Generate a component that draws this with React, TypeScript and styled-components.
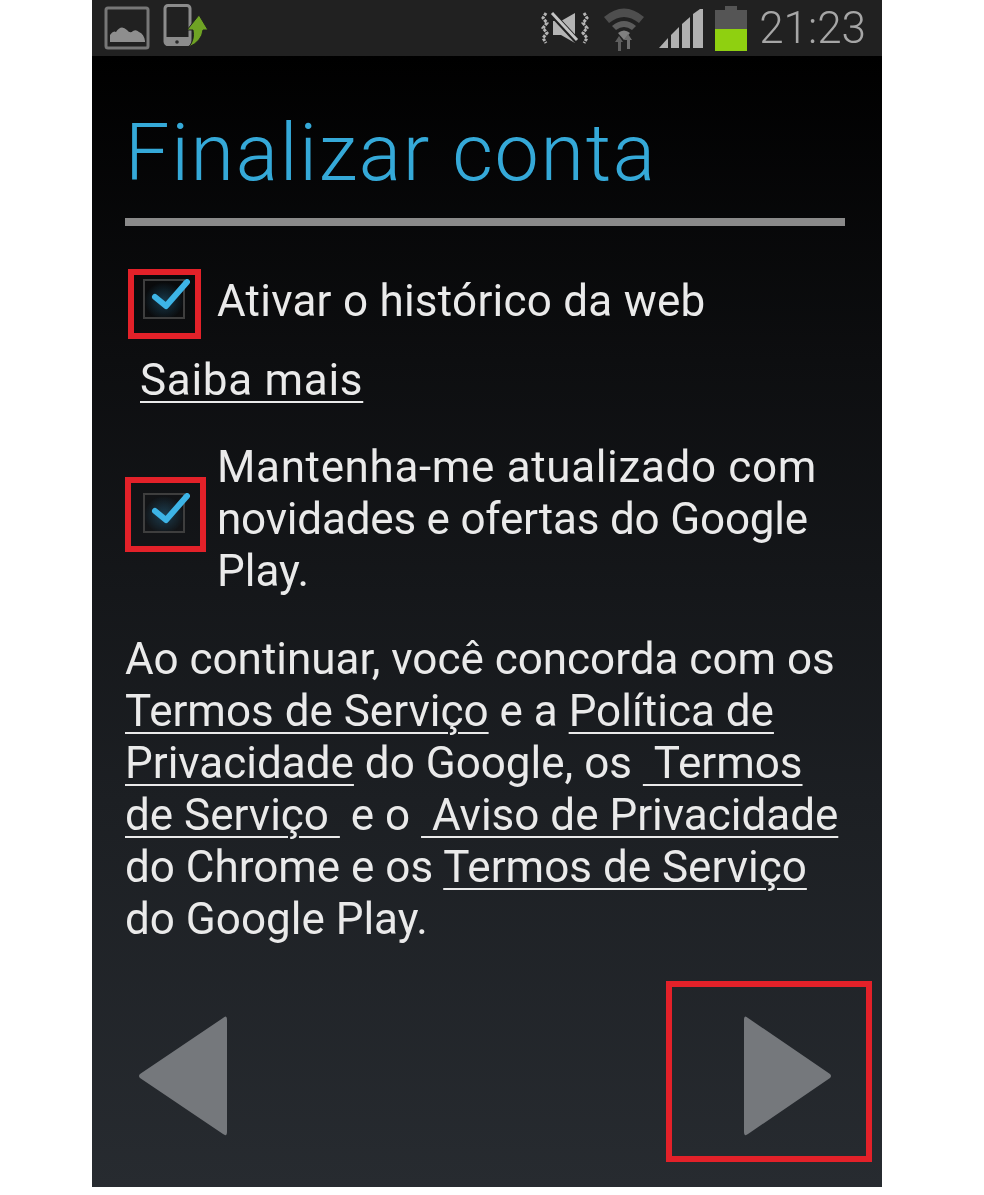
import React from "react"
import styled, { createGlobalStyle } from "styled-components"

const GlobalStyle = createGlobalStyle`
  html, body {
    margin: 0;
    padding: 0;
    background: #fff;
  }
`

export default function App() {
  return <Page>
    <GlobalStyle/>
    <Phone>
      <StatusBar>
        <StatusGroup>
          <PictureIcon/>
          <UploadIcon/>
        </StatusGroup>
        <StatusGroup>
          <MuteIcon/>
          <WifiIcon/>
          <SignalIcon/>
          <BatterySlot>
            <BatteryIcon/>
          </BatterySlot>
          <Clock>21:23</Clock>
        </StatusGroup>
      </StatusBar>
      <Content>
        <Title>Finalizar conta</Title>
        <Divider/>
        <OptionRow>
          <CheckFrame>
            <CheckIcon/>
          </CheckFrame>
          <SingleLine>Ativar o histórico da web</SingleLine>
        </OptionRow>
        <LearnMore>Saiba mais</LearnMore>
        <OptionRow $tall>
          <CheckFrame $large>
            <CheckIcon/>
          </CheckFrame>
          <BodyText>
            <Line $spacing={0.65}>Mantenha-me atualizado com</Line>
            <Line $spacing={-0.2}>novidades e ofertas do Google</Line>
            <Line>Play.</Line>
          </BodyText>
        </OptionRow>
        <Terms>
          Ao continuar, você concorda com os<br/>
          <Link>Termos de Serviço</Link> e a <Link>Política de</Link><br/>
          <Link>Privacidade</Link> do Google, os <Link>&nbsp;Termos</Link><br/>
          <Link>de Serviço&nbsp;</Link> e o <Link>&nbsp;Aviso de Privacidade</Link><br/>
          do Chrome e os <Link>Termos de Serviço</Link><br/>
          do Google Play.
        </Terms>
      </Content>
      <NavBar>
        <BackButton>
          <ArrowIcon direction="left"/>
        </BackButton>
        <NextButton>
          <ArrowIcon direction="right"/>
        </NextButton>
      </NavBar>
    </Phone>
  </Page>
}

function PictureIcon() {
  return <svg width="46" height="44" viewBox="0 0 46 44">
    <rect x="2" y="2" width="42" height="40" rx="2" fill="none" stroke="#777" strokeWidth="3"/>
    <path d="M6 36 V29 Q9 24 12 26 Q17 18 23 24 Q26 28 29 25 Q32 23 35 26 Q40 28 41 35 V36 Z" fill="#8e8e8e"/>
  </svg>
}

function UploadIcon() {
  return <UploadSvg width="46" height="46" viewBox="0 0 46 46">
    <rect x="1" y="2.5" width="25" height="39" rx="3" fill="none" stroke="#8c8c8c" strokeWidth="3"/>
    <path d="M1 34 H26 V40 Q26 43 23 43 H4 Q1 43 1 40 Z" fill="#8c8c8c"/>
    <circle cx="13" cy="39" r="1.8" fill="#2a2a2a"/>
    <path d="M35 12 L44 27 H39 Q38 38 25 44 Q31 36 29 27 H23 Z" fill="#6fa324" stroke="#212121" strokeWidth="1"/>
  </UploadSvg>
}

function MuteIcon() {
  return <svg width="48" height="34" viewBox="0 0 48 34">
    <path d="M12 10 H20 L34 2 V32 L20 24 H12 Z" fill="#b4b4b4"/>
    <path d="M12 4 L37 31" stroke="#212121" strokeWidth="6"/>
    <path d="M11 2 L36 29" stroke="#c4c4c4" strokeWidth="3"/>
    <path d="M5 2 L2 7 L6 12 L2 17 L6 22 L2 27 L5 32 M43 2 L46 7 L42 12 L46 17 L42 22 L46 27 L43 32" fill="none" stroke="#b4b4b4" strokeWidth="3" strokeDasharray="3 1"/>
  </svg>
}

function WifiIcon() {
  return <svg width="42" height="46" viewBox="0 0 42 46">
    <path d="M1 12 Q21 -5 41 12 L36 18 Q21 6 6 18 Z" fill="#4e4e4e"/>
    <path d="M9 21 Q21 11 33 21 L29 25 Q21 19 13 25 Z" fill="#5c5c5c"/>
    <path d="M15 28 Q21 23 27 28 L21 35 Z" fill="#808080"/>
    <path d="M15 46 V37 H12 L16 31 L20 37 H18 V46 Z" fill="#5e5e5e"/>
    <path d="M24 44 V35 H21 L25 29 L29 35 H27 V44 Z" fill="#6e6e6e"/>
  </svg>
}

function SignalIcon() {
  return <svg width="46" height="41" viewBox="0 0 46 41">
    <path d="M0 40 L9 30 V40 Z" fill="#b0b0b0"/>
    <path d="M12 27 L20 19 V40 H12 Z" fill="#b0b0b0"/>
    <path d="M23 16 L31 9 V40 H23 Z" fill="#b0b0b0"/>
    <path d="M34 6 L41 1 H44 V40 H34 Z" fill="#b0b0b0"/>
  </svg>
}

function BatteryIcon() {
  return <svg width="32" height="45" viewBox="0 0 32 45">
    <rect x="10" y="0" width="12" height="5" fill="#555"/>
    <rect x="0" y="4" width="32" height="19" fill="#555"/>
    <rect x="0" y="23" width="32" height="22" fill="#8fd010"/>
  </svg>
}

function CheckIcon() {
  return <CheckSvg width="50" height="50" viewBox="0 0 50 50">
    <defs>
      <radialGradient id="glow" cx="50%" cy="55%" r="50%">
        <stop offset="0%" stopColor="#2f8fc0" stopOpacity="0.35"/>
        <stop offset="100%" stopColor="#2f8fc0" stopOpacity="0"/>
      </radialGradient>
    </defs>
    <rect x="4" y="1" width="40" height="38" fill="url(#glow)"/>
    <rect x="4" y="1" width="40" height="38" fill="none" stroke="#3e3e3e" strokeWidth="2"/>
    <path d="M15 18 L26 27 L47 3" fill="none" stroke="#3db4e6" strokeWidth="6" strokeLinecap="round" strokeLinejoin="round"/>
  </CheckSvg>
}

function ArrowIcon({ direction }: { direction: "left" | "right" }) {
  return <svg width="90" height="122" viewBox="0 0 90 122">
    <path
      d={direction === "right"
        ? "M2 5 Q2 -1 6 3 L88 59 Q90 61 88 63 L6 119 Q2 122 2 117 Z"
        : "M89 5 Q89 -1 85 3 L2 59 Q0 61 2 63 L85 119 Q89 122 89 117 Z"}
      fill="#75787c"
      strokeLinejoin="round"
    />
  </svg>
}

const Page = styled.div`
  width: 984px;
  height: 1195px;
  padding-left: 92px;
  box-sizing: border-box;
  background: #fff;
  overflow: hidden;
`
const Phone = styled.div`
  width: 790px;
  height: 1187px;
  display: flex;
  flex-direction: column;
  background: linear-gradient(180deg, #000 56px, #0d0e10 360px, #1c1f23 800px, #272b30 1187px);
  font-family: Roboto, "Liberation Sans", sans-serif;
`
const StatusBar = styled.div`
  height: 56px;
  flex-shrink: 0;
  display: flex;
  align-items: center;
  justify-content: space-between;
  background: #212121;
  padding: 0 16px 0 12px;
  box-sizing: border-box;
`
const StatusGroup = styled.div`
  display: flex;
  align-items: center;
  gap: 14px;
  filter: blur(0.6px);
`
const UploadSvg = styled.svg`
  margin-top: -4px;
  overflow: visible;
`
const BatterySlot = styled.div`
  display: flex;
  margin-left: -4px;
`
const Clock = styled.span`
  margin-left: -2px;
  font-size: 44px;
  font-weight: 300;
  line-height: 56px;
  color: #a6a6a6;
`
const Content = styled.div`
  flex: 1;
  padding: 0 37px 0 33px;
  color: #eaeaea;
`
const Title = styled.h1`
  margin: 49px 0 0 0;
  font-size: 79px;
  font-weight: 300;
  line-height: 96px;
  letter-spacing: 1.7px;
  color: #35a9d8;
  filter: blur(0.7px);
`
const Divider = styled.div`
  height: 8px;
  margin-top: 17px;
  background: #8a8a8a;
`
const OptionRow = styled.div<{ $tall?: boolean }>`
  display: flex;
  align-items: center;
  margin-top: ${(p) => (p.$tall ? "35px" : "43px")};
`
const CheckFrame = styled.div<{ $large?: boolean }>`
  width: ${(p) => (p.$large ? "81px" : "73px")};
  height: ${(p) => (p.$large ? "75px" : "70px")};
  margin-left: ${(p) => (p.$large ? "0" : "3px")};
  margin-right: ${(p) => (p.$large ? "11px" : "16px")};
  margin-top: ${(p) => (p.$large ? "-10px" : "0")};
  padding: ${(p) => (p.$large ? "7px 2px 0 0" : "0")};
  box-sizing: border-box;
  border: 6px solid #e32129;
  display: flex;
  align-items: center;
  justify-content: center;
  flex-shrink: 0;
`
const CheckSvg = styled.svg`
  display: block;
  overflow: visible;
  filter: blur(0.5px);
`
const BodyText = styled.div`
  font-size: 44px;
  line-height: 52px;
  filter: blur(0.7px);
`
const SingleLine = styled(BodyText)`
  margin-top: -6px;
  letter-spacing: 0.25px;
`
const Line = styled.div<{ $spacing?: number }>`
  letter-spacing: ${(p) => p.$spacing ?? 0}px;
`
const LearnMore = styled.div`
  display: table;
  margin: 15px 0 0 15px;
  font-size: 44px;
  line-height: 52px;
  letter-spacing: 0.7px;
  text-decoration: underline;
  text-decoration-thickness: 2px;
  text-underline-offset: 6px;
  filter: blur(0.7px);
`
const Terms = styled.p`
  margin: 36px 0 0 0;
  font-size: 44px;
  line-height: 52px;
  white-space: nowrap;
  filter: blur(0.7px);
`
const Link = styled.span`
  text-decoration: underline;
  text-decoration-thickness: 2px;
  text-underline-offset: 6px;
`
const NavBar = styled.div`
  display: flex;
  align-items: center;
  justify-content: space-between;
  padding: 0 10px 25px 46px;
`
const BackButton = styled.div`
  display: flex;
  margin-top: 8px;
`
const NextButton = styled.div`
  width: 206px;
  height: 181px;
  box-sizing: border-box;
  border: 6px solid #e32129;
  display: flex;
  align-items: center;
  padding: 8px 0 0 70px;
`
